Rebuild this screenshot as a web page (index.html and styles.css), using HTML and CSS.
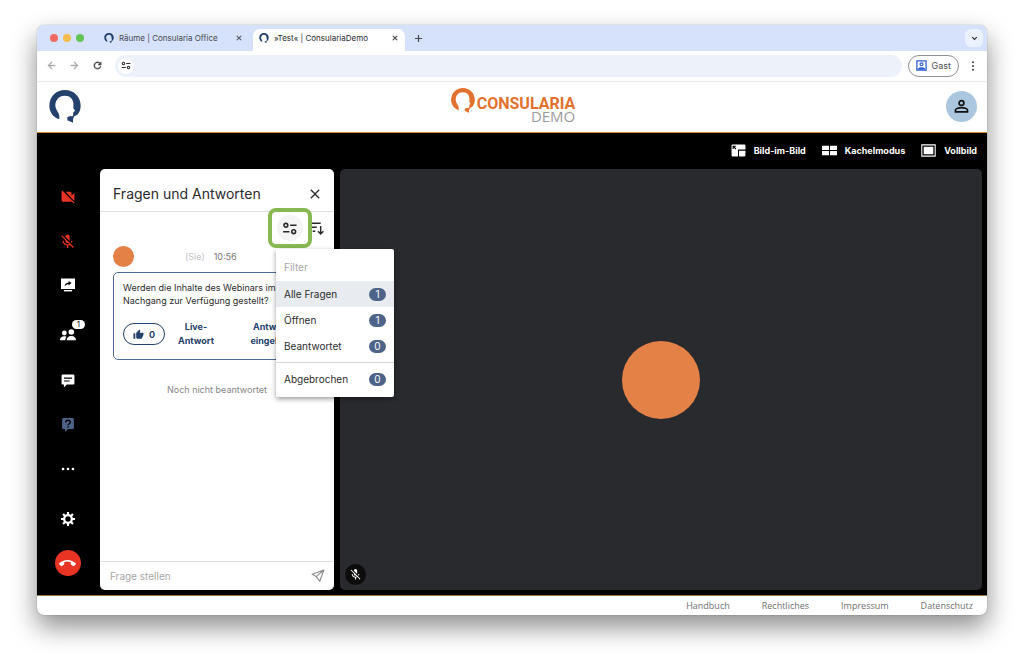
FILE: index.html
```html
<!DOCTYPE html>
<html lang="de">
<head>
<meta charset="utf-8">
<title>»Test« | ConsulariaDemo</title>
<link rel="stylesheet" href="styles.css">
</head>
<body>
<svg class="sprite" aria-hidden="true">
  <symbol id="head" viewBox="0 0 94 99"><path d="M30 88C12 82 0 66 0 47 0 20 20 0 47 0c26 0 47 20 47 47 0 11-4 21-10 27l-9 5c-4 5-4 10-4 19l-17-7v-9c4-5 12-2 17-4l1-11 5-5-5-8c3-24-6-37-26-37-18 0-28 14-28 29 0 14 12 22 12 33z"/></symbol>
  <symbol id="close" viewBox="0 0 24 24"><path d="M19 6.4 17.6 5 12 10.6 6.4 5 5 6.4l5.600 5.600L5 17.600 6.400 19 12 13.400 17.600 19 19 17.600 13.400 12z"/></symbol>
  <symbol id="tune" viewBox="0 0 24 24"><g fill="none" stroke="currentColor" stroke-width="2.200"><circle cx="5.500" cy="7.500" r="2.700"/><path d="M11.500 7.500H20.500M1.500 16.500h9"/><circle cx="16.500" cy="16.500" r="2.700"/></g></symbol>
  <symbol id="back" viewBox="0 0 24 24"><path d="M20 11H7.800l5.600-5.600L12 4l-8 8 8 8 1.400-1.400L7.800 13H20z"/></symbol>
  <symbol id="forward" viewBox="0 0 24 24"><path d="m12 4-1.400 1.400 5.600 5.600H4v2h12.200l-5.600 5.600L12 20l8-8z"/></symbol>
  <symbol id="reload" viewBox="0 0 24 24"><path d="M17.650 6.350A8 8 0 1 0 19.730 14h-2.080A6 6 0 1 1 12 6c1.660 0 3.140.69 4.220 1.780L13 11h7V4z"/></symbol>
  <symbol id="micoff" viewBox="0 0 24 24"><path d="M19 11h-1.700c0 .74-.16 1.430-.43 2.050l1.230 1.230c.56-.98.9-2.090.9-3.280zm-4.020.17c0-.06.02-.11.02-.17V5a3 3 0 0 0-6 0v.18l5.980 5.990zM4.270 3 3 4.270l6.010 6.010V11a3 3 0 0 0 3.660 2.940l1.660 1.660c-.71.33-1.500.52-2.320.52-2.760 0-5.300-2.100-5.300-5.100H5c0 3.410 2.720 6.230 6 6.720V21h2v-3.280a7 7 0 0 0 2.550-.9L19.730 21 21 19.730z"/></symbol>
</svg>

<div class="window">
  <div class="tabbar">
    <div class="lights"><i class="light red"></i><i class="light yellow"></i><i class="light green"></i></div>
    <div class="tab">
      <svg class="favicon"><use href="#head"/></svg><span class="tab-title">Räume | Consularia Office</span>
      <button class="tab-close" aria-label="Tab schließen"><svg><use href="#close"/></svg></button>
    </div>
    <div class="tab active">
      <svg class="favicon"><use href="#head"/></svg><span class="tab-title">»Test« | ConsulariaDemo</span>
      <button class="tab-close" aria-label="Tab schließen"><svg><use href="#close"/></svg></button>
    </div>
    <button class="new-tab" aria-label="Neuer Tab"><svg viewBox="0 0 10 10"><path d="M5 1v8M1 5h8" fill="none" stroke="currentColor" stroke-width="1.300"/></svg></button>
    <button class="tab-menu" aria-label="Tabs durchsuchen"><svg viewBox="0 0 10 10"><path d="m2.500 3.500 2.500 2.500 2.500-2.500" fill="none" stroke="currentColor" stroke-width="1.300"/></svg></button>
  </div>

  <div class="toolbar">
    <button class="nav dim" aria-label="Zurück"><svg><use href="#back"/></svg></button>
    <button class="nav dim" aria-label="Vorwärts"><svg><use href="#forward"/></svg></button>
    <button class="nav" aria-label="Neu laden"><svg><use href="#reload"/></svg></button>
    <div class="address">
      <button class="site-info" aria-label="Website-Informationen"><svg><use href="#tune"/></svg></button>
      <input class="address-input" type="text" aria-label="Adresse">
    </div>
    <button class="guest"><svg viewBox="0 0 12 12"><path fill="none" stroke="currentColor" stroke-width="1.400" d="M1 1h10v10H1z"/><circle cx="6" cy="4.700" r="1.600" fill="none" stroke="currentColor" stroke-width="1.300"/><path d="M2 10.500V9.600C3.200 8.200 4.600 7.800 6 7.800s2.800.4 4 1.800v.9z"/></svg>Gast</button>
    <button class="more" aria-label="Menü"><svg viewBox="0 0 12 12"><circle cx="6" cy="1.500" r="1.100"/><circle cx="6" cy="6" r="1.100"/><circle cx="6" cy="10.500" r="1.100"/></svg></button>
  </div>

  <header class="header">
    <a class="home" href="#" aria-label="Startseite"><svg><use href="#head"/></svg></a>
    <a class="brand" href="#">
      <svg><use href="#head"/></svg>
      <span class="brand-text"><span class="brand-name">CONSULARIA</span><span class="brand-sub">DEMO</span></span>
    </a>
    <button class="account" aria-label="Konto"><svg viewBox="0 0 24 24"><g fill="none" stroke="currentColor" stroke-width="2.400"><circle cx="12" cy="7" r="3.400"/><path d="M3.500 19.500v-2.500c0-2.200 5-3.500 8.500-3.500s8.500 1.300 8.500 3.500v2.500z"/></g></svg></button>
  </header>

  <main class="room">
    <div class="views">
      <button class="view"><svg viewBox="0 0 28 24"><path fill-rule="evenodd" d="M3 1h22q2 0 2 2v7H13v13H3q-2 0-2-2V3q0-2 2-2zm0 2v6h2V6.500l3.500 3.500L10 8.500 6.500 5H9V3z"/><path d="M15 12.500h12V21q0 2-2 2H15z"/></svg>Bild-im-Bild</button>
      <button class="view"><svg viewBox="0 0 28 24"><path d="M0 3h13v8H0zm15 0h13v8H15zM0 13h13v8H0zm15 0h13v8H15z"/></svg>Kachelmodus</button>
      <button class="view"><svg viewBox="0 0 28 24"><path fill="none" stroke="currentColor" stroke-width="2" d="M1.500 1.500h25v21h-25z"/><path d="M5 5h18v14H5z"/></svg>Vollbild</button>
    </div>

    <div class="workspace">
      <nav class="controls" aria-label="Steuerung">
        <button class="control alert" aria-label="Kamera einschalten"><svg viewBox="0 0 24 24"><path d="M1 3h2l16 17H3q-2 0-2-2zM8 3h8q2 0 2 2v5l5-5v14l-2-2z"/><path fill="none" stroke="currentColor" stroke-width="2" d="m1.500 1.500 21 21"/></svg></button>
        <button class="control alert" aria-label="Mikrofon einschalten"><svg class="wide"><use href="#micoff"/></svg></button>
        <button class="control" aria-label="Bildschirm teilen"><svg viewBox="0 0 24 24"><path fill-rule="evenodd" d="M0 1h24v18H0zm6 12h2c1-2 3-2.500 5-2.500V13l5-4.500L13 5v2.500C9 8 7 10 6 13z"/><path d="M5 20.500h14V23H5z"/></svg></button>
        <button class="control people" aria-label="Teilnehmer"><svg viewBox="0 0 24 20"><circle cx="6.500" cy="7" r="3.600"/><circle cx="17" cy="5.500" r="4.200"/><path d="M0 18c0-4 2.300-6 6.500-6 1.500 0 2.300.2 3.200.6C8.500 14 8 16 8 18zm10 0c0-4 2.500-6.500 7-6.500s7 2.500 7 6.500z"/></svg><span class="count">1</span></button>
        <button class="control" aria-label="Chat"><svg viewBox="0 0 24 24"><path fill-rule="evenodd" d="M3 1h18q2 0 2 2v13q0 2-2 2H10l-5 5v-5H3q-2 0-2-2V3q0-2 2-2zm2 5v2h14V6zm0 5v2h10v-2z"/></svg></button>
        <button class="control current" aria-label="Fragen und Antworten"><svg viewBox="0 0 24 24"><path d="M4 0h16q2 0 2 2v15q0 2-2 2H12l-5 5v-5H4q-2 0-2-2V2q0-2 2-2z"/><path fill="none" stroke="#000" stroke-width="2.300" d="M8 7.500c.2-5 8.200-4.500 8-.2-.2 3-4 2.200-4 5.200M12 14v2.500"/></svg></button>
        <button class="control" aria-label="Weitere Optionen"><svg viewBox="0 0 24 24"><circle cx="3.500" cy="12" r="2.300"/><circle cx="12" cy="12" r="2.300"/><circle cx="20.500" cy="12" r="2.300"/></svg></button>
        <button class="control settings" aria-label="Einstellungen"><svg viewBox="0 0 24 24"><circle cx="12" cy="12" r="6.600" fill="none" stroke="currentColor" stroke-width="4"/><path fill="none" stroke="currentColor" stroke-width="3.600" d="M12 0v5m0 14v5M0 12h5m14 0h5M3.500 3.500 7 7m10 10 3.500 3.500m0-17L17 7M7 17l-3.500 3.500"/></svg></button>
        <button class="control" aria-label="Auflegen"><span class="hangup"><svg viewBox="0 0 24 24"><path d="M12 9c-1.600 0-3.150.25-4.600.72v3.100c0 .39-.23.74-.56.9-.98.49-1.870 1.120-2.660 1.850-.18.18-.43.28-.7.28-.28 0-.53-.11-.71-.29L.29 13.080a1 1 0 0 1 0-1.410C3.340 8.780 7.460 7 12 7s8.660 1.780 11.710 4.670a1 1 0 0 1 0 1.420l-2.480 2.480c-.18.18-.43.29-.71.29a1 1 0 0 1-.7-.28 11.300 11.300 0 0 0-2.670-1.850 1 1 0 0 1-.56-.9v-3.100C15.150 9.250 13.600 9 12 9z"/></svg></span></button>
      </nav>

      <section class="panel">
        <div class="panel-head">
          <h1>Fragen und Antworten</h1>
          <button class="panel-close" aria-label="Schließen"><svg><use href="#close"/></svg></button>
        </div>
        <div class="panel-tools">
          <div class="filter">
            <button class="filter-button" aria-label="Filter"><svg><use href="#tune"/></svg></button>
            <div class="menu">
              <p class="menu-label">Filter</p>
              <button class="option selected">Alle Fragen<span class="pill">1</span></button>
              <button class="option">Öffnen<span class="pill">1</span></button>
              <button class="option">Beantwortet<span class="pill">0</span></button>
              <hr>
              <button class="option">Abgebrochen<span class="pill">0</span></button>
            </div>
          </div>
          <button class="sort" aria-label="Sortieren"><svg viewBox="0 0 24 24"><path fill="none" stroke="currentColor" stroke-width="2.200" d="M1 5h18M4 11h9M7 17h4M19 9v12M15 17l4 4 4-4"/></svg></button>
        </div>
        <div class="questions">
          <div class="meta"><span class="avatar"></span><span class="you">(Sie)</span><time>10:56</time></div>
          <article class="question">
            <p>Werden die Inhalte des Webinars im Nachgang zur Verfügung gestellt?</p>
            <div class="actions">
              <button class="like"><svg viewBox="0 0 24 24"><path d="M1 21h4V9H1zm22-11c0-1.100-.9-2-2-2h-6.310l.95-4.570.03-.32c0-.41-.17-.79-.44-1.060L14.170 1 7.590 7.590C7.220 7.950 7 8.450 7 9v10c0 1.100.9 2 2 2h9c.83 0 1.540-.5 1.840-1.220l3.020-7.050c.09-.23.14-.47.14-.73z"/></svg>0</button>
              <button class="action">Live-Antwort</button>
              <button class="action">Antwort eingeben</button>
            </div>
          </article>
          <p class="status">Noch nicht beantwortet</p>
        </div>
        <form class="ask">
          <input type="text" placeholder="Frage stellen" aria-label="Frage stellen">
          <button type="button" aria-label="Senden"><svg viewBox="0 0 24 24"><path fill="none" stroke="currentColor" stroke-width="2" stroke-linejoin="round" d="M22 2 2 9l7 4 6 8zM22 2 9 13"/></svg></button>
        </form>
      </section>

      <section class="stage" aria-label="Video">
        <span class="speaker"></span>
        <span class="muted"><svg><use href="#micoff"/></svg></span>
      </section>
    </div>
  </main>

  <footer class="footer">
    <a href="#">Handbuch</a><a href="#">Rechtliches</a><a href="#">Impressum</a><a href="#">Datenschutz</a>
  </footer>
</div>
</body>
</html>
```

FILE: styles.css
```css
* { box-sizing: border-box; }

body {
  margin: 0;
  min-height: 100vh;
  padding: 25px 37px 49px;
  display: flex;
  background: #fff;
  color: #2b2b2d;
  font-family: Inter, Roboto, sans-serif;
  font-size: 9px;
}

button, input { font: inherit; color: inherit; border: 0; background: none; padding: 0; margin: 0; outline: 0; }
button { display: flex; align-items: center; justify-content: center; cursor: pointer; }
a { color: inherit; text-decoration: none; }
p, h1 { margin: 0; }
svg { display: block; flex: none; fill: currentColor; }
.sprite { position: absolute; width: 0; height: 0; }

.window {
  flex: 1;
  min-width: 0;
  display: flex;
  flex-direction: column;
  overflow: hidden;
  border-radius: 7px;
  background: #fff;
  box-shadow: 0 0 1px rgba(0, 0, 0, .5), 0 12px 26px rgba(0, 0, 0, .45);
}

/* Browser chrome */
.tabbar { display: flex; height: 26px; padding: 4px 4px 0 13px; background: #d6e2fb; }
.lights { display: flex; gap: 5px; align-items: center; height: 18px; margin-right: 14px; }
.light { width: 8px; height: 8px; border-radius: 50%; }
.red { background: #ee6a5f; }
.yellow { background: #f5bd4f; }
.green { background: #61c454; }
.tab { display: flex; align-items: center; width: 155px; padding: 0 12px 5px 6px; color: #45484d; font-size: 8px; }
.tab.active { width: 152px; padding-right: 8px; background: #fff; border-radius: 7px 7px 0 0; color: #27292c; }
.favicon { width: 10px; height: 10px; margin-right: 5px; color: #24406c; }
.tab-title { flex: 1; white-space: nowrap; }
.tab-close { width: 8px; height: 16px; margin-right: -2px; }
.tab-close svg { width: 8px; height: 8px; stroke: currentColor; }
.new-tab { width: 26px; height: 18px; color: #45484d; }
.new-tab svg { width: 9px; height: 9px; }
.tab-menu { width: 18px; height: 18px; margin-left: auto; border-radius: 6px; background: #ecf2fd; }
.tab-menu svg { width: 9px; height: 9px; }

.toolbar { display: flex; align-items: center; height: 31px; padding: 0 8px 1px 3px; border-bottom: 1px solid #e8e9eb; }
.nav { width: 23px; height: 24px; color: #47494d; }
.nav svg { width: 11px; height: 11px; stroke: currentColor; }
.nav.dim { color: #a9abae; }
.address { flex: 1; display: flex; align-items: center; height: 22px; margin: 0 6px; padding: 0 3px; border-radius: 11px; background: #ecf1fa; }
.site-info { width: 16px; height: 16px; border-radius: 50%; background: #fff; }
.site-info svg { width: 11px; height: 11px; }
.address-input { flex: 1; min-width: 0; }
.guest { gap: 5px; height: 22px; padding: 0 7px; border: 1px solid #8e9094; border-radius: 11px; color: #4b4d51; }
.guest svg { width: 11px; height: 11px; color: #2f5fd0; }
.more { width: 12px; height: 20px; margin-left: 8px; }
.more svg { width: 10px; height: 10px; }

/* Site header */
.header { display: grid; grid-template-columns: 1fr auto 1fr; align-items: center; height: 51px; padding: 0 10px 2px 12px; border-bottom: 1px solid #d98a3d; }
.home { color: #24406c; justify-self: start; }
.home svg { width: 32px; height: 33px; }
.brand { display: flex; align-items: flex-start; gap: 2px; color: #e2712e; }
.brand > svg { width: 24px; height: 25px; }
.brand-text { display: flex; flex-direction: column; padding: 9px 0 2px; font: 700 16px/14px Roboto, sans-serif; }
.brand-sub { align-self: flex-end; color: #9b9b9b; font: 400 15px/11px "Open Sans", sans-serif; }
.account { justify-self: end; width: 31px; height: 31px; border-radius: 50%; background: #abc7e0; color: #111; }
.account svg { width: 17px; height: 17px; }

/* Meeting room */
.room { flex: 1; display: flex; flex-direction: column; background: #000; border-bottom: 1px solid #9a7141; color: #fff; }
.views { display: flex; justify-content: flex-end; gap: 16px; height: 36px; padding: 0 10px 1px 0; }
.view { gap: 8px; font-weight: 700; }
.view svg { width: 15px; height: 13px; }
.workspace { flex: 1; display: grid; grid-template-columns: 63px 234px minmax(0, 1fr); padding: 0 5px 5px 0; }
.controls { display: flex; flex-direction: column; padding: 6px 2px 5px 0; }
.control { height: 44px; position: relative; }
.control svg { width: 14px; height: 14px; }
.control .wide { width: 17px; height: 17px; }
.alert { color: #e93323; }
.people { height: 52px; padding-top: 4px; }
.people svg { width: 16px; }
.count { position: absolute; left: 35px; top: 13px; width: 13px; border-radius: 5px; background: #fff; color: #111; font-size: 8px; line-height: 9px; }
.current { color: #4d6488; }
.settings { margin-top: auto; }
.control .hangup { display: flex; align-items: center; justify-content: center; width: 26px; height: 26px; border-radius: 50%; background: #e93323; }
.control .hangup svg { width: 17px; height: 17px; }

.panel { display: flex; flex-direction: column; border-radius: 5px; background: #fff; color: #2b2b2d; }
.panel-head { display: flex; align-items: center; justify-content: space-between; height: 43px; padding: 8px 11px 0 13px; border-bottom: 1px solid #dedede; }
.panel-head h1 { font-size: 14px; font-weight: 400; line-height: 20px; white-space: nowrap; }
.panel-close svg { width: 16px; height: 16px; }
.panel-tools { display: flex; align-items: center; justify-content: flex-end; gap: 5px; height: 32px; padding-right: 10px; }
.filter { position: relative; z-index: 1; }
.filter-button { position: relative; width: 26px; height: 26px; border-radius: 50%; background: #f4f4f4; box-shadow: 0 0 0 5px #fff; }
.filter-button::after { content: ""; position: absolute; inset: -7px -9px; border: 4px solid #87b851; border-radius: 8px; }
.filter-button svg { width: 17px; height: 17px; }
.sort svg { width: 16px; height: 16px; }
.menu { position: absolute; top: 34px; left: -1px; width: 118px; padding: 5px 0; border-radius: 2px; background: #fff; box-shadow: 0 2px 5px rgba(0, 0, 0, .4); font-size: 10px; }
.menu-label { padding: 0 8px; color: #a6a6a6; line-height: 27px; }
.option { width: 100%; height: 26px; padding: 0 8px; justify-content: space-between; }
.option.selected { background: #e8ebf0; }
.pill { width: 17px; border-radius: 7px; background: #4d6488; color: #fff; line-height: 13px; }
.menu hr { margin: 3px 0; border: 0; border-top: 1px solid #d5d5d5; }

.questions { flex: 1; padding: 2px 13px; }
.meta { display: flex; align-items: center; }
.avatar { width: 21px; height: 21px; margin-right: 51px; border-radius: 50%; background: #e48147; }
.you { margin-right: 9px; color: #c4c4c4; }
.meta time { color: #757575; }
.question { margin-top: 5px; padding: 8px 9px 11px; border: 1px solid #4d6b98; border-radius: 5px; }
.question p { line-height: 13px; }
.actions { display: flex; align-items: center; margin-top: 13px; color: #24406c; font-weight: 700; }
.like { gap: 5px; width: 42px; height: 22px; border: 1px solid #24406c; border-radius: 11px; }
.like svg { width: 11px; height: 11px; }
.action { width: 62px; padding: 0 8px; line-height: 14px; }
.action + .action { margin-left: 13px; }
.status { margin-top: 23px; color: #858585; text-align: center; line-height: 13px; }
.ask { display: flex; align-items: center; height: 29px; padding: 0 9px 0 10px; border-top: 1px solid #dedede; }
.ask input { flex: 1; min-width: 0; font-size: 10px; }
.ask input::placeholder { color: #a6a6a6; opacity: 1; }
.ask svg { width: 14px; height: 14px; color: #8b8b8b; }

.stage { position: relative; display: flex; align-items: center; justify-content: center; margin-left: 6px; border-radius: 5px; background: #292a2e; }
.speaker { width: 78px; height: 78px; border-radius: 50%; background: #e48147; }
.muted { position: absolute; left: 5px; bottom: 5px; display: flex; align-items: center; justify-content: center; width: 21px; height: 21px; border-radius: 50%; background: #0c0c0d; }
.muted svg { width: 13px; height: 13px; }

.footer { display: flex; justify-content: flex-end; align-items: center; gap: 32px; height: 19px; padding: 0 14px; color: #707070; font-family: "Open Sans", sans-serif; }
```
